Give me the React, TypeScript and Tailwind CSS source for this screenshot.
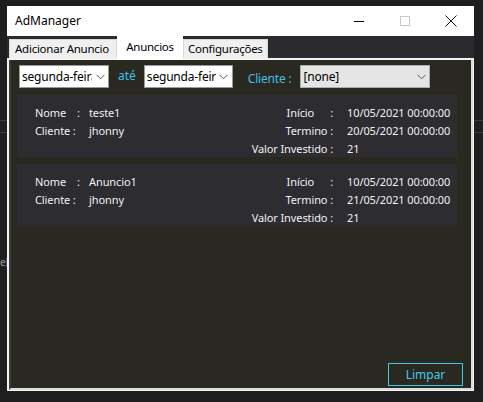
import React from "react";

const Chevron = () => (
  <svg width="9" height="6" viewBox="0 0 9 6">
    <path d="M0.5 0.8 L4.5 4.8 L8.5 0.8" fill="none" stroke="#555" strokeWidth="1" />
  </svg>
);

const Combo = ({ text, w, gray }: { text: string; w: string; gray?: boolean }) => (
  <div
    className={`${w} h-[23px] flex items-center border overflow-hidden shrink-0 ${
      gray ? "bg-[#e5e5e5] border-[#adadad]" : "bg-white border-[#9a9a9a]"
    }`}
  >
    <span className="flex-1 min-w-0 pl-[2px] text-[12px] tracking-[-0.2px] text-black whitespace-nowrap overflow-hidden">
      {text}
    </span>
    <span className="w-[16px] shrink-0 flex justify-center">
      <Chevron />
    </span>
  </div>
);

type Ad = { nome: string; cliente: string; inicio: string; termino: string; valor: string };

const ads: Ad[] = [
  { nome: "teste1", cliente: "jhonny", inicio: "10/05/2021 00:00:00", termino: "20/05/2021 00:00:00", valor: "21" },
  { nome: "Anuncio1", cliente: "jhonny", inicio: "10/05/2021 00:00:00", termino: "21/05/2021 00:00:00", valor: "21" },
];

const AdCard = ({ ad }: { ad: Ad }) => (
  <div className="w-[440px] h-[62px] bg-[#2d2c31] pl-[18px] pt-[8px] text-[11px] tracking-[-0.1px] text-[#f0f0f0] grid grid-cols-[42px_12px_150px_94px_14px_auto] auto-rows-[18px] items-center leading-none whitespace-nowrap">
    <span>Nome</span>
    <span>:</span>
    <span>{ad.nome}</span>
    <span className="text-right">
      Início<span className="inline-block w-[16px]" />:
    </span>
    <span />
    <span>{ad.inicio}</span>

    <span className="col-span-2">Cliente :</span>
    <span>{ad.cliente}</span>
    <span className="text-right">Termino :</span>
    <span />
    <span>{ad.termino}</span>

    <span className="col-span-3" />
    <span className="text-right">Valor Investido :</span>
    <span />
    <span>{ad.valor}</span>
  </div>
);

export default function App() {
  return (
    <div
      className="relative w-[483px] h-[402px] bg-[#1e1e1e] pt-[6px] pl-[7px] overflow-hidden"
      style={{ fontFamily: '"Noto Sans", "Open Sans", sans-serif' }}
    >
      {/* background windows peeking out */}
      <div className="absolute left-0 top-[120px] w-[7px] h-px bg-[#3a3a3a]" />
      <div className="absolute left-0 top-[132px] w-[7px] h-px bg-[#3a3a3a]" />
      <div className="absolute right-0 top-[120px] w-[9px] h-px bg-[#3a3a3a]" />
      <div className="absolute right-0 top-[132px] w-[9px] h-px bg-[#3a3a3a]" />
      <div className="absolute left-0 top-[257px] w-[7px] overflow-hidden text-[10px] text-[#9a9a9a] leading-none">
        e[
      </div>

      <div className="w-[467px] h-[385px] flex flex-col bg-[#2b2a2f]">
        {/* title bar */}
        <div className="h-[30px] bg-white flex items-center shrink-0">
          <span className="pl-[8px] text-[12px] text-black flex-1">AdManager</span>
          <div className="w-[46px] h-[30px] flex items-center justify-center">
            <div className="w-[10px] h-px bg-black" />
          </div>
          <div className="w-[46px] h-[30px] flex items-center justify-center">
            <div className="w-[10px] h-[10px] border border-[#c8c8c8]" />
          </div>
          <div className="w-[46px] h-[30px] flex items-center justify-center">
            <svg width="12" height="12" viewBox="0 0 12 12">
              <path d="M0.5 0.5 L11.5 11.5 M11.5 0.5 L0.5 11.5" stroke="#111" strokeWidth="1" />
            </svg>
          </div>
        </div>

        {/* tabs */}
        <div className="h-[22px] flex items-end pl-[2px] shrink-0 relative z-10 text-[11.5px] tracking-[-0.25px] text-black">
          <div className="h-[19px] w-[108px] bg-[#f0f0f0] border border-b-0 border-[#d9d9d9] flex items-center pl-[5px] whitespace-nowrap overflow-hidden">
            Adicionar Anuncio
          </div>
          <div className="h-[24px] w-[66px] bg-white flex items-start pt-[2px] justify-center -mb-[2px]">
            Anuncios
          </div>
          <div className="h-[19px] w-[85px] bg-[#f0f0f0] border border-b-0 border-[#d9d9d9] flex items-center pl-[4px] whitespace-nowrap overflow-hidden">
            Configurações
          </div>
        </div>

        {/* tab page */}
        <div className="flex-1 border-t-2 border-l-2 border-[#f4f4f4] border-r-[1px] border-b-[1px]">
          <div className="h-full border-l-2 border-r-2 border-b-2 border-[#dcdcdc] border-l-[#3c3c3c] bg-[#292922] flex flex-col">
            <div className="flex items-center pt-[5px] pl-[8px] h-[28px]">
              <Combo text="segunda-feira" w="w-[90px]" />
              <span className="ml-[9px] mr-[8px] text-[12px] text-[#3ec1e2] self-start pt-[2px]">até</span>
              <Combo text="segunda-feira" w="w-[89px]" />
              <span className="ml-[15px] mr-[9px] text-[12px] tracking-[-0.2px] text-[#3ec1e2] self-end">Cliente :</span>
              <Combo text="[none]" w="w-[130px]" gray />
            </div>

            <div className="flex flex-col gap-[7px] pt-[7px] pl-[6px]">
              {ads.map((ad, i) => (
                <AdCard key={i} ad={ad} />
              ))}
            </div>

            <div className="flex-1" />
            <div className="flex justify-end pr-[8px] pb-[2px]">
              <button className="w-[75px] h-[23px] border border-[#41c6e6] text-[12px] text-[#46c8e8] flex items-center justify-center">
                Limpar
              </button>
            </div>
          </div>
        </div>
      </div>
    </div>
  );
}
